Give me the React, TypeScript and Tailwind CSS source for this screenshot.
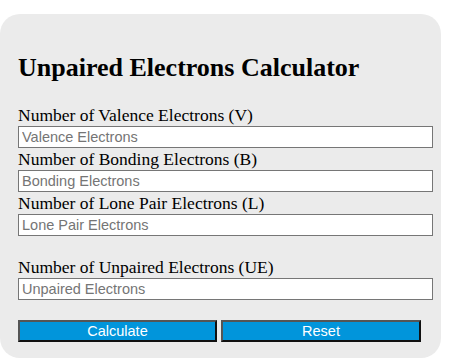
import React from 'react';

const fields = [
  { label: 'Number of Valence Electrons (V)', placeholder: 'Valence Electrons' },
  { label: 'Number of Bonding Electrons (B)', placeholder: 'Bonding Electrons' },
  { label: 'Number of Lone Pair Electrons (L)', placeholder: 'Lone Pair Electrons' },
];

function Campo({ label, placeholder }: { label: string; placeholder: string }) {
  return (
    <div>
      <label className="block h-[22px] text-[17.5px] leading-[22px] text-black">{label}</label>
      <input
        type="text"
        placeholder={placeholder}
        className="block h-[22px] w-[415px] border border-[#767676] bg-white px-[3px] text-[14.5px] font-['Liberation_Sans',Arial,sans-serif] placeholder:text-[#757575]"
      />
    </div>
  );
}

export default function App() {
  return (
    <div className="w-[460px] h-[362px] bg-white pt-[14px] font-['Liberation_Serif','Times_New_Roman',serif]">
      <div className="w-[441px] h-[344px] rounded-[20px] bg-[#ebebeb] px-[18px] pt-[39px]">
        <h2 className="text-[26px] font-bold leading-[30px] text-black">Unpaired Electrons Calculator</h2>
        <div className="mt-[21px]">
          {fields.map((f) => (
            <Campo key={f.label} label={f.label} placeholder={f.placeholder} />
          ))}
        </div>
        <div className="mt-[20px]">
          <Campo label="Number of Unpaired Electrons (UE)" placeholder="Unpaired Electrons" />
        </div>
        <div className="mt-[20px] flex gap-[4px]">
          <button className="h-[22px] w-[199px] border-2 border-t-[#555] border-l-[#555] border-b-[#111] border-r-[#111] bg-[#0195db] text-[14.5px] leading-none text-white font-['Liberation_Sans',Arial,sans-serif]">
            Calculate
          </button>
          <button className="h-[22px] w-[200px] border-2 border-t-[#555] border-l-[#555] border-b-[#111] border-r-[#111] bg-[#0195db] text-[14.5px] leading-none text-white font-['Liberation_Sans',Arial,sans-serif]">
            Reset
          </button>
        </div>
      </div>
    </div>
  );
}
